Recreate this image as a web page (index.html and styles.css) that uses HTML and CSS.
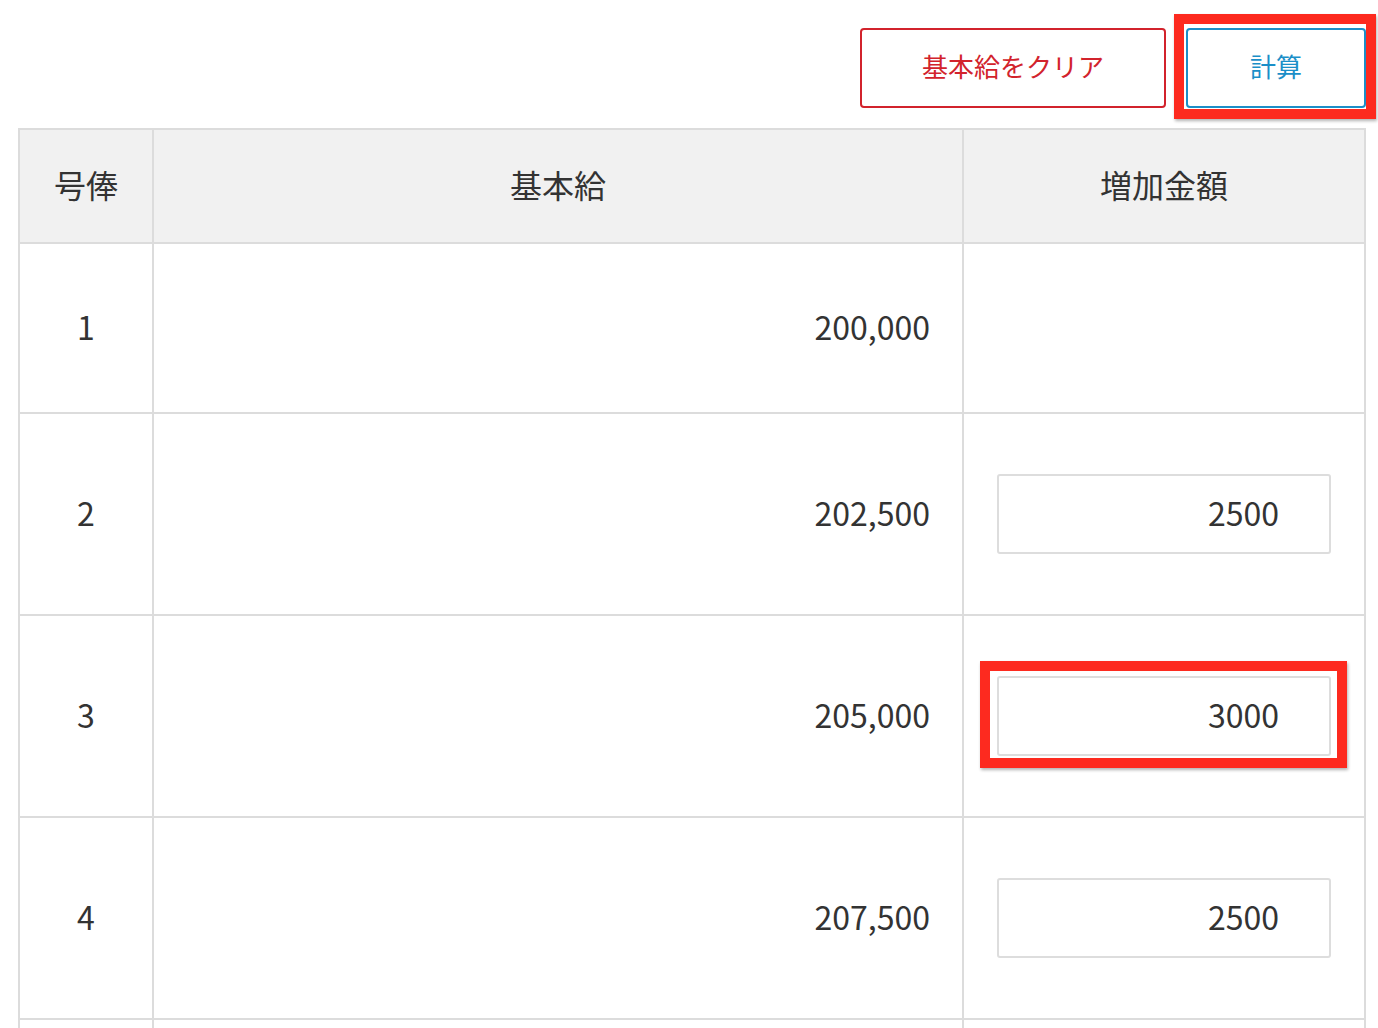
FILE: index.html
```html
<!DOCTYPE html>
<html lang="ja">
<head>
<meta charset="utf-8">
<title>号俸表</title>
<link rel="stylesheet" href="styles.css">
</head>
<body>
<div class="page">
  <div class="actions">
    <button class="btn btn-clear" type="button">基本給をクリア</button>
    <span class="mark-wrap">
      <button class="btn btn-calc" type="button">計算</button>
      <span class="mark mark-btn"></span>
    </span>
  </div>
  <table class="grade-table">
    <colgroup>
      <col class="c-grade">
      <col class="c-base">
      <col class="c-inc">
    </colgroup>
    <thead>
      <tr>
        <th>号俸</th>
        <th>基本給</th>
        <th>増加金額</th>
      </tr>
    </thead>
    <tbody>
      <tr>
        <td class="grade">1</td>
        <td class="base">200,000</td>
        <td class="inc"></td>
      </tr>
      <tr>
        <td class="grade">2</td>
        <td class="base">202,500</td>
        <td class="inc"><input class="amount" type="text" value="2500"></td>
      </tr>
      <tr>
        <td class="grade">3</td>
        <td class="base">205,000</td>
        <td class="inc"><span class="mark-wrap"><input class="amount" type="text" value="3000"><span class="mark mark-input"></span></span></td>
      </tr>
      <tr>
        <td class="grade">4</td>
        <td class="base">207,500</td>
        <td class="inc"><input class="amount" type="text" value="2500"></td>
      </tr>
      <tr class="row-next">
        <td class="grade"></td>
        <td class="base"></td>
        <td class="inc"></td>
      </tr>
    </tbody>
  </table>
</div>
</body>
</html>
```
FILE: styles.css
```css
html, body {
  margin: 0;
  padding: 0;
  background: #fff;
}
body {
  font-family: "Noto Sans CJK JP", "Noto Sans", sans-serif;
  color: #333;
}
.page {
  width: 1348px;
  margin-left: 18px;
  padding-top: 28px;
}
.actions {
  display: flex;
  justify-content: flex-end;
  gap: 20px;
  margin-bottom: 20px;
}
.btn {
  height: 80px;
  background: #fff;
  border-radius: 4px;
  font-family: inherit;
  font-size: 26px;
  line-height: 1;
  padding: 0 0 4px;
  cursor: pointer;
  display: block;
}
.btn-clear {
  width: 306px;
  border: 2px solid #d2232c;
  color: #d2232c;
}
.btn-calc {
  width: 180px;
  border: 2px solid #1b8fc8;
  color: #1b8fc8;
}
.mark-wrap {
  position: relative;
  display: block;
}
.mark {
  position: absolute;
  border: 10px solid #fd2a1f;
  box-shadow: 1px 2px 3px rgba(0, 0, 0, 0.3);
  pointer-events: none;
}
.mark-btn {
  top: -14px;
  left: -12px;
  right: -10px;
  bottom: -11px;
}
.mark-input {
  top: -15px;
  left: -17px;
  right: -16px;
  bottom: -12px;
}
.grade-table {
  width: 1348px;
  border-collapse: collapse;
  table-layout: fixed;
  font-size: 32px;
  line-height: 48px;
}
.c-grade { width: 134px; }
.c-base { width: 810px; }
.c-inc { width: 402px; }
.grade-table th,
.grade-table td {
  border: 2px solid #dcdcdc;
}
.grade-table th {
  background: #f1f1f1;
  font-weight: normal;
  padding: 30px 0 34px;
  text-align: center;
}
.grade-table td {
  padding: 58px 33px 62px;
  vertical-align: middle;
}
.grade-table td.grade {
  text-align: center;
  padding-left: 0;
  padding-right: 0;
}
.grade-table td.base {
  text-align: right;
  padding-right: 32px;
}
.grade-table td.inc {
  padding-top: 60px;
  padding-bottom: 60px;
}
.row-next td {
  height: 200px;
}
.amount {
  display: block;
  box-sizing: border-box;
  width: 100%;
  height: 80px;
  border: 2px solid #dddddd;
  border-radius: 3px;
  padding: 0 50px 4px 10px;
  text-align: right;
  font-family: inherit;
  font-size: 32px;
  color: #333;
  background: #fff;
  outline: none;
}
```
